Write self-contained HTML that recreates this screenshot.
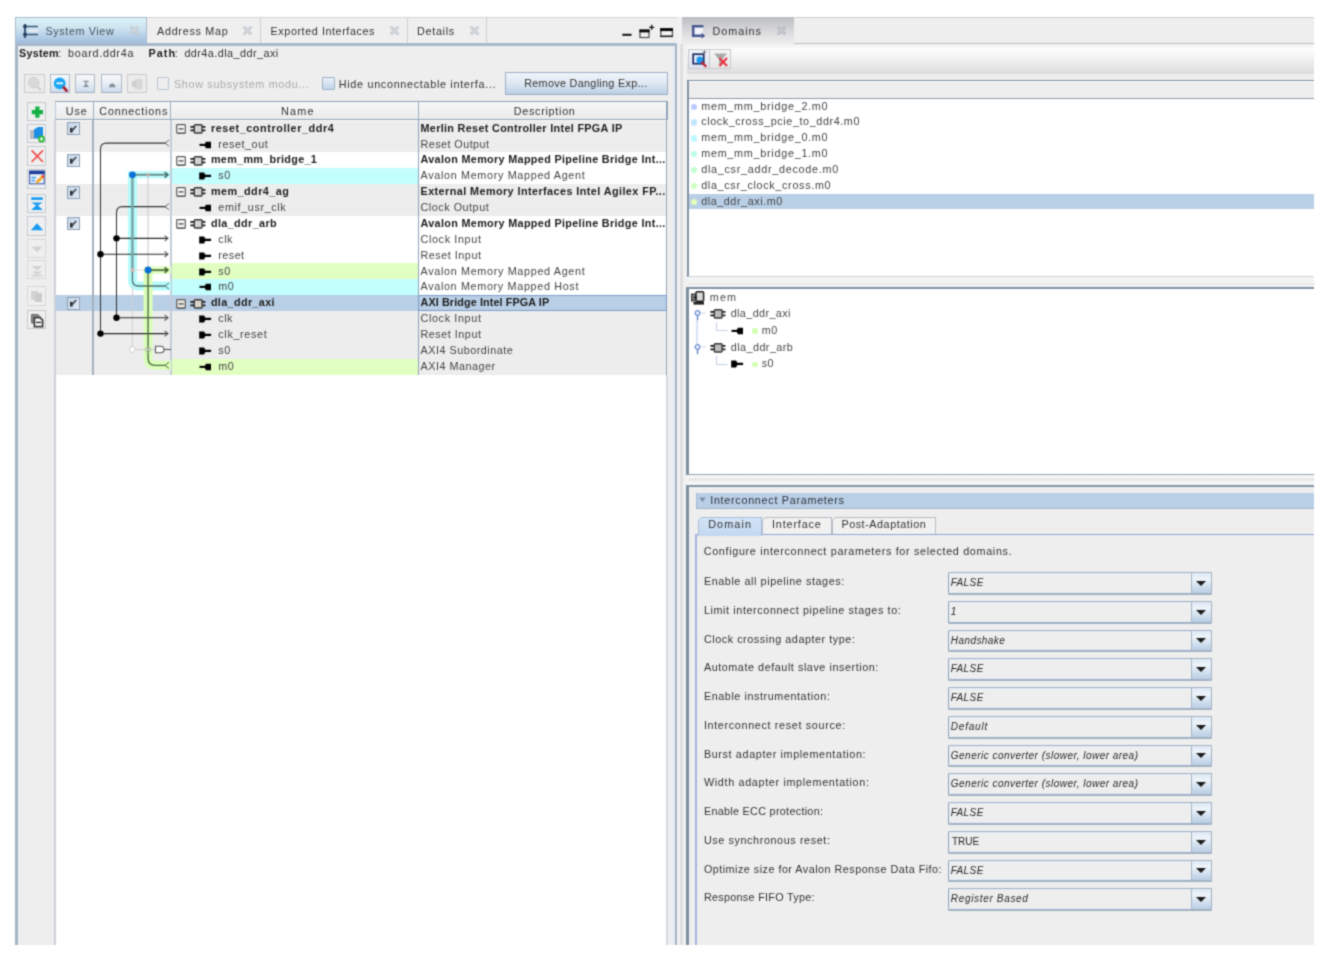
<!DOCTYPE html>
<html><head><meta charset="utf-8"><title>Platform Designer</title>
<style>
html,body{margin:0;padding:0;background:#fff;}
body{width:1334px;height:956px;overflow:hidden;position:relative;font-family:"Liberation Sans",sans-serif;font-size:10.8px;color:#323232;filter:url(#soft);}
.a{position:absolute;}
.t{position:absolute;white-space:nowrap;line-height:14px;height:14px;letter-spacing:0.45px;}
.b{font-weight:bold;color:#1c1c1c;}
.ic{position:absolute;overflow:visible;}
.row{position:absolute;left:55px;width:612px;height:15.875px;}
.cb{position:absolute;width:11px;height:11px;border:1px solid #8f9fb3;background:linear-gradient(135deg,#c6d5e8,#e2ebf6);border-radius:0.5px;}
.cb svg{position:absolute;left:-0.5px;top:-0.5px;}
.btn{position:absolute;border:1px solid #b2bac5;border-bottom-color:#a3b0c0;border-radius:0.6px;background:linear-gradient(#f7f9fb,#e9eff6 45%,#cbdbec);box-sizing:border-box;}
.dis{border:1.3px solid #cbcbcb;background:#ececec;}
.lb{position:absolute;width:19.8px;height:19.8px;box-sizing:border-box;border:1px solid #c6cad0;background:#efefef;}
.combo{position:absolute;left:948px;width:263.8px;height:22.8px;box-sizing:border-box;border:1.7px solid #a3b2c3;border-left-color:#94a5b8;border-bottom-width:2px;border-radius:1.2px;background:#eeeeee;box-shadow:inset 0 0 0 1px #e2ecf6;}
.combo i{position:absolute;left:2.7px;top:4px;font-size:11px;line-height:13px;color:#3a3a3a;white-space:nowrap;}
.combo b{position:absolute;right:0;top:0;width:18.6px;height:100%;border-left:1.2px solid #a5b5c7;background:linear-gradient(#dde8f3,#edf3f9 30%,#d6e3f0 60%,#b9cee6);}
  .combo b:after{content:"";position:absolute;left:3.9px;top:7.8px;border:5.7px solid transparent;border-top:5.4px solid #1c1c1c;border-bottom:none;}
.pl{position:absolute;left:704px;white-space:nowrap;line-height:14px;height:14px;}
</style></head><body>
<svg width="0" height="0" style="position:absolute"><filter id="soft" x="0" y="0" width="100%" height="100%" color-interpolation-filters="sRGB"><feConvolveMatrix order="3" kernelMatrix="0.036 0.118 0.036 0.118 0.384 0.118 0.036 0.118 0.036" divisor="1" edgeMode="duplicate" preserveAlpha="true"/></filter></svg>

<div class="a" style="left:15px;top:17px;width:662px;height:927.9px;background:#eeeeee"></div>
<div class="a" style="left:15px;top:17px;width:662px;height:27px;background:#efefef;border-top:1px solid #d4d4d4;box-sizing:border-box"></div>
<div class="a" style="left:15px;top:17px;width:131.5px;height:27px;background:linear-gradient(#dcf1f6,#cfe6f1 35%,#b7d0e7 68%,#9ebbdc);border:1px solid #a9bccb;border-bottom:none;box-sizing:border-box"></div>
<div class="a" style="left:260.0px;top:18px;width:1px;height:26px;background:#cfcfcf"></div>
<div class="a" style="left:406.5px;top:18px;width:1px;height:26px;background:#cfcfcf"></div>
<div class="a" style="left:486.2px;top:18px;width:1px;height:26px;background:#cfcfcf"></div>
<div class="a" style="left:14.8px;top:44px;width:3px;height:900.9px;background:#a7b5c5"></div>
<div class="a" style="left:17.8px;top:46px;width:1.6px;height:898.9px;background:#e9eef4"></div>
<div class="a" style="left:673.2px;top:46px;width:1.4px;height:898.9px;background:#e6ecf3"></div>
<div class="a" style="left:674.5px;top:44px;width:2.6px;height:900.9px;background:#a7b5c5"></div>
<div class="a" style="left:14.8px;top:43.2px;width:662.3px;height:2.8px;background:#a9b9cb"></div>
<div class="a" style="left:17.8px;top:46px;width:655.4px;height:1px;background:#e6edf4"></div>
<svg class="ic" style="left:22px;top:23px" width="18" height="16" viewBox="0 0 18 16"><path d="M3 1v14" stroke="#2f4a6b" stroke-width="1.8"/><path d="M3 3.5h13M3 11.5h13" stroke="#3d5878" stroke-width="1.6"/><circle cx="3" cy="3.5" r="2" fill="#24405f"/><circle cx="3" cy="11.5" r="2" fill="#24405f"/><rect x="7" y="6" width="9" height="3.5" fill="#dfe8f2"/></svg>
<div class="t" style="left:45.5px;top:24.0px;letter-spacing:0.598px;color:#46525e">System View</div>
<svg class="ic" style="left:129.5px;top:26px" width="9" height="9" viewBox="0 0 9 9"><path d="M1.5 1.5l6 6M7.5 1.5l-6 6" stroke="#b9c0c8" stroke-width="2.6" stroke-linecap="round"/><path d="M1.5 1.5l6 6M7.5 1.5l-6 6" stroke="#f4f4f4" stroke-width="0.9" stroke-linecap="round"/></svg>
<div class="t" style="left:157px;top:24.0px;letter-spacing:0.717px;">Address Map</div>
<svg class="ic" style="left:243px;top:26px" width="9" height="9" viewBox="0 0 9 9"><path d="M1.5 1.5l6 6M7.5 1.5l-6 6" stroke="#b9c0c8" stroke-width="2.6" stroke-linecap="round"/><path d="M1.5 1.5l6 6M7.5 1.5l-6 6" stroke="#f4f4f4" stroke-width="0.9" stroke-linecap="round"/></svg>
<div class="t" style="left:270.6px;top:24.0px;letter-spacing:0.565px;">Exported Interfaces</div>
<svg class="ic" style="left:389.5px;top:26px" width="9" height="9" viewBox="0 0 9 9"><path d="M1.5 1.5l6 6M7.5 1.5l-6 6" stroke="#b9c0c8" stroke-width="2.6" stroke-linecap="round"/><path d="M1.5 1.5l6 6M7.5 1.5l-6 6" stroke="#f4f4f4" stroke-width="0.9" stroke-linecap="round"/></svg>
<div class="t" style="left:417px;top:24.0px;letter-spacing:0.697px;">Details</div>
<svg class="ic" style="left:470.2px;top:26px" width="9" height="9" viewBox="0 0 9 9"><path d="M1.5 1.5l6 6M7.5 1.5l-6 6" stroke="#b9c0c8" stroke-width="2.6" stroke-linecap="round"/><path d="M1.5 1.5l6 6M7.5 1.5l-6 6" stroke="#f4f4f4" stroke-width="0.9" stroke-linecap="round"/></svg>
<svg class="ic" style="left:622px;top:23px" width="52" height="16" viewBox="0 0 52 16"><path d="M0.3 11.8h9.2" stroke="#111" stroke-width="2"/><rect x="18" y="7.5" width="9" height="7" fill="#f4f4f4" stroke="#555" stroke-width="1.3"/><path d="M17.4 7.9h10.2" stroke="#0a0a0a" stroke-width="3"/><path d="M27.2 4.3h5M29.7 1.8v5" stroke="#111" stroke-width="1.3"/><rect x="38.8" y="6" width="11.6" height="7.2" fill="#f6f6f6" stroke="#555" stroke-width="1.3"/><path d="M38.1 6.6h12.9" stroke="#0a0a0a" stroke-width="3"/><path d="M38.1 13.4h12.9" stroke="#222" stroke-width="1.4"/></svg>
<div class="t b" style="left:19px;top:45.9px;letter-spacing:0.256px;">System</div>
<div class="t" style="left:58.3px;top:45.9px;">:</div>
<div class="t" style="left:68px;top:45.9px;letter-spacing:0.717px;">board.ddr4a</div>
<div class="t b" style="left:148.4px;top:45.9px;letter-spacing:1.098px;">Path</div>
<div class="t" style="left:174.8px;top:45.9px;">:</div>
<div class="t" style="left:184.4px;top:45.9px;letter-spacing:0.459px;">ddr4a.dla_ddr_axi</div>
<div class="btn dis" style="left:24px;top:73.6px;width:20.5px;height:19.3px"><svg width="19" height="18" viewBox="0 0 19 18" style="position:absolute;left:0;top:0"><circle cx="8.6" cy="7.6" r="5.3" fill="#d9d9d9" stroke="#d0d0d0"/><path d="M12.3 11.6l3.6 3.8" stroke="#cfcfcf" stroke-width="2.4"/></svg></div>
<div class="btn " style="left:49.5px;top:73.6px;width:20.5px;height:19.3px"><svg width="19" height="18" viewBox="0 0 19 18" style="position:absolute;left:0;top:0"><circle cx="8.7" cy="8.3" r="5.9" fill="#1aa6f4"/><path d="M5.4 8.3h6.6" stroke="#fff" stroke-width="1.7"/><path d="M12.9 12.6l2.6 3" stroke="#b01c2c" stroke-width="2.8" stroke-linecap="round"/></svg></div>
<div class="btn " style="left:74.5px;top:73.6px;width:20.5px;height:19.3px"><svg width="19" height="18" viewBox="0 0 19 18" style="position:absolute;left:0;top:0"><path d="M7.4 6.4h5.2M10 6.6v2.6" stroke="#8a8f96" stroke-width="1.3"/><path d="M6.9 12h6.2l-3.1-3.5z" fill="#8a8f96"/></svg></div>
<div class="btn " style="left:101px;top:73.6px;width:20.5px;height:19.3px"><svg width="19" height="18" viewBox="0 0 19 18" style="position:absolute;left:0;top:0"><path d="M6.9 12.2h6.6q-0.5-3.6-3.3-3.6t-3.3 3.6z" fill="#8a8f96"/></svg></div>
<div class="btn dis" style="left:126.5px;top:73.6px;width:20.5px;height:19.3px"><svg width="19" height="18" viewBox="0 0 19 18" style="position:absolute;left:0;top:0"><path d="M4.6 7.2l2.8-3.2h7v10.4h-7.6v-3.2z" fill="#d6d6d6"/><path d="M3.8 6.6h4v5.4h-4z" fill="#cecece"/></svg></div>
<div class="a" style="left:156.5px;top:77px;width:12.5px;height:12.5px;box-sizing:border-box;border:1px solid #b9c5d2;background:#eeeeee;border-radius:1px"></div>
<div class="t" style="left:174px;top:76.7px;letter-spacing:0.670px;color:#aaaaaa">Show subsystem modu...</div>
<div class="a" style="left:322px;top:77px;width:13px;height:12.5px;box-sizing:border-box;border:1px solid #9fb2c8;background:linear-gradient(#e9f0f8,#c3d5ea);border-radius:1px"></div>
<div class="t" style="left:338.8px;top:76.7px;letter-spacing:0.691px;">Hide unconnectable interfa...</div>
<div class="btn" style="left:505px;top:71.5px;width:163px;height:23.5px;border-color:#9db0c6;background:linear-gradient(#f0f4f9,#e0e9f3 45%,#c3d5e9 90%,#b8cce3)"></div>
<div class="t" style="left:524.2px;top:76.3px;letter-spacing:0.312px;">Remove Dangling Exp...</div>
<div class="lb" style="left:26.5px;top:101.5px;"><svg width="18" height="18" viewBox="0 0 18 18" style="position:absolute;left:0;top:0"><path d="M9.4 3.6v11.2M3.8 9.2h11.2" stroke="#14b045" stroke-width="4.2"/></svg></div>
<div class="lb" style="left:26.5px;top:123.7px;"><svg width="18" height="18" viewBox="0 0 18 18" style="position:absolute;left:0;top:0"><path d="M2 5h5v9H2z" fill="#b9bcc0"/><path d="M6 4.5l4-2.5h5v9l-3 2.5h-6z" fill="#1e8fe6"/><circle cx="13.5" cy="14" r="3.4" fill="#22b52e"/><path d="M13.5 12v4M11.5 14h4" stroke="#fff" stroke-width="1.2"/></svg></div>
<div class="lb" style="left:26.5px;top:146.3px;"><svg width="18" height="18" viewBox="0 0 18 18" style="position:absolute;left:0;top:0"><path d="M3.6 3.4l11.4 11.6M15 3.4L3.6 15" stroke="#f04848" stroke-width="1.6"/></svg></div>
<div class="lb" style="left:26.5px;top:168.8px;"><svg width="18" height="18" viewBox="0 0 18 18" style="position:absolute;left:0;top:0"><rect x="1.6" y="1.2" width="14.6" height="12.6" fill="#eef2fa" stroke="#3a5bb0" stroke-width="1.1"/><rect x="1.1" y="0.8" width="15.6" height="3.4" fill="#1f3f9a"/><path d="M3.4 7.6h4.6M3.4 10.6h3.6" stroke="#4aa3ea" stroke-width="1.6"/><path d="M7.6 13.8l1-3.2 6-5.8 2 2-6 5.8z" fill="#f5a623"/><path d="M13.3 6.1l1.3-1.3 2 2-1.3 1.3z" fill="#e33"/></svg></div>
<div class="lb" style="left:26.5px;top:193.5px;"><svg width="18" height="18" viewBox="0 0 18 18" style="position:absolute;left:0;top:0"><path d="M3.2 3.6h11.6" stroke="#169cf2" stroke-width="2.6"/><path d="M3.2 7.4h11.6L9 11z" fill="#169cf2"/><path d="M3.2 15h11.6L9 9.6z" fill="#169cf2"/></svg></div>
<div class="lb" style="left:26.5px;top:216px;"><svg width="18" height="18" viewBox="0 0 18 18" style="position:absolute;left:0;top:0"><path d="M2.8 13.2h12.4L9 6.2z" fill="#169cf2"/></svg></div>
<div class="lb" style="left:26.5px;top:238.5px;border-color:#d8d8d8;"><svg width="18" height="18" viewBox="0 0 18 18" style="position:absolute;left:0;top:0"><path d="M3.5 6.5h11L9 12.2z" fill="#d2d2d2"/></svg></div>
<div class="lb" style="left:26.5px;top:259.5px;border-color:#d8d8d8;"><svg width="18" height="18" viewBox="0 0 18 18" style="position:absolute;left:0;top:0"><path d="M3.5 5h11L9 9.6z" fill="#d2d2d2"/><path d="M3.5 10.4h11L9 14z" fill="#d2d2d2"/><path d="M3.5 14.6h11" stroke="#d2d2d2" stroke-width="1.6"/></svg></div>
<div class="lb" style="left:26.5px;top:286px;border-color:#d8d8d8;"><svg width="18" height="18" viewBox="0 0 18 18" style="position:absolute;left:0;top:0"><path d="M3 4h7v9H3z" fill="#d3d3d3"/><path d="M7 6h7v9H7z" fill="#cbcbcb"/></svg></div>
<div class="lb" style="left:26.5px;top:309.7px;"><svg width="18" height="18" viewBox="0 0 18 18" style="position:absolute;left:0;top:0"><path d="M3.6 3.6h6.4l2 2v6.4H3.6z" fill="#8d8d8d" stroke="#666" stroke-width="1"/><path d="M6.4 6.6h5.6l2.6 2.6v6.4H6.4z" fill="#fafafa" stroke="#3c3c3c" stroke-width="1.7"/><path d="M8 11.4h5.2" stroke="#3c3c3c" stroke-width="1.5"/></svg></div>
<div class="a" style="left:54.5px;top:101px;width:612.5px;height:843.9px;background:#fff"></div>
<div class="row" style="top:120.500px;background:#ededed"></div>
<div class="row" style="top:136.375px;background:#ededed"></div>
<div class="row" style="top:152.250px;background:#fff"></div>
<div class="row" style="top:168.125px;background:#fff"></div>
<div class="a" style="left:171px;top:168.125px;width:247px;height:15.875px;background:#c2fffd"></div>
<div class="row" style="top:184.000px;background:#ededed"></div>
<div class="row" style="top:199.875px;background:#ededed"></div>
<div class="row" style="top:215.750px;background:#fff"></div>
<div class="row" style="top:231.625px;background:#fff"></div>
<div class="row" style="top:247.500px;background:#fff"></div>
<div class="row" style="top:263.375px;background:#fff"></div>
<div class="a" style="left:171px;top:263.375px;width:247px;height:15.875px;background:#e2ffc2"></div>
<div class="row" style="top:279.250px;background:#fff"></div>
<div class="a" style="left:171px;top:279.250px;width:247px;height:15.875px;background:#c2fffd"></div>
<div class="row" style="top:295.125px;background:#b9cfe6"></div>
<div class="row" style="top:311.000px;background:#ededed"></div>
<div class="row" style="top:326.875px;background:#ededed"></div>
<div class="row" style="top:342.750px;background:#ededed"></div>
<div class="row" style="top:358.625px;background:#ededed"></div>
<div class="a" style="left:171px;top:358.625px;width:247px;height:15.875px;background:#e2ffc2"></div>
<div class="a" style="left:54.5px;top:100.5px;width:613px;height:19.5px;box-sizing:border-box;background:linear-gradient(#f6f7f8,#ebebec);border:1px solid #8ea3bb;border-left-color:#b9c6d4"></div>
<div class="a" style="left:92.5px;top:101px;width:1px;height:18.5px;background:#9fb0c4"></div>
<div class="a" style="left:170.0px;top:101px;width:1px;height:18.5px;background:#9fb0c4"></div>
<div class="a" style="left:417.5px;top:101px;width:1px;height:18.5px;background:#9fb0c4"></div>
<div class="t" style="left:65.7px;top:103.8px;letter-spacing:0.898px;">Use</div>
<div class="t" style="left:99.3px;top:103.8px;letter-spacing:0.797px;">Connections</div>
<div class="t" style="left:281px;top:103.8px;letter-spacing:1.262px;">Name</div>
<div class="t" style="left:513.7px;top:103.8px;letter-spacing:0.718px;">Description</div>
<div class="a" style="left:53.7px;top:120px;width:2.3px;height:824.9px;background:#cdd1d7"></div>
<div class="a" style="left:92.2px;top:120px;width:1.7px;height:254.50px;background:#a5b0be"></div>
<div class="a" style="left:170px;top:120px;width:1.6px;height:254.50px;background:#c3ccd8"></div>
<div class="a" style="left:417.6px;top:120px;width:1px;height:254.50px;background:#8ea3bb"></div>
<div class="a" style="left:665.7px;top:374.5px;width:2.6px;height:570.4px;background:#d5dae0"></div>
<div class="a" style="left:666px;top:101px;width:1.2px;height:273.50px;background:#97a6b8"></div>
<div class="a" style="left:418px;top:295.12px;width:248.5px;height:15.875px;box-sizing:border-box;border:1px solid #7d9cc6"></div>
<div class="cb" style="left:66.8px;top:122.10px"><svg width="12" height="12" viewBox="0 0 12 12"><path d="M3 4.8 H5.6 V9.6 H3Z" fill="#2f3338"/><path d="M4.8 8 L9.2 2.9" fill="none" stroke="#3a3f45" stroke-width="1.5"/></svg></div>
<svg class="ic" style="left:176.1px;top:123.90px" width="11" height="11" viewBox="0 0 11 11"><rect x="0.7" y="0.7" width="8.6" height="8.4" rx="0.8" fill="#f8f8f8" stroke="#5a5a5a" stroke-width="1.2"/><path d="M1 9.3h8.4" stroke="#4a4a4a" stroke-width="0.8"/><path d="M2.6 4.9h4.9" stroke="#3a3a3a" stroke-width="1.2"/></svg>
<svg class="ic" style="left:189.6px;top:123.90px" width="16" height="10" viewBox="0 0 16 10"><path d="M0.4 2.9h15M0.4 6.4h15" stroke="#1c1c1c" stroke-width="1.7"/><rect x="4.3" y="0.7" width="7.8" height="8.3" rx="0.9" fill="#d4d4d4" stroke="#383838" stroke-width="1.4"/></svg>
<div class="t b" style="left:210.9px;top:120.7px;letter-spacing:0.594px;">reset_controller_ddr4</div>
<div class="t b" style="left:420.5px;top:120.7px;letter-spacing:0.331px;">Merlin Reset Controller Intel FPGA IP</div>
<svg class="ic" style="left:198.8px;top:140.57px" width="13" height="8" viewBox="0 0 13 8"><path d="M0.5 3.9h7" stroke="#000" stroke-width="2.1"/><path d="M5.8 3 L6.9 0.7 H12 V7.2 H6.9 L5.8 4.9Z" fill="#000"/></svg>
<div class="t" style="left:218.3px;top:136.57px;letter-spacing:0.546px;color:#444;">reset_out</div>
<div class="t" style="left:420.5px;top:136.57px;letter-spacing:0.443px;color:#444;">Reset Output</div>
<div class="cb" style="left:66.8px;top:153.85px"><svg width="12" height="12" viewBox="0 0 12 12"><path d="M3 4.8 H5.6 V9.6 H3Z" fill="#2f3338"/><path d="M4.8 8 L9.2 2.9" fill="none" stroke="#3a3f45" stroke-width="1.5"/></svg></div>
<svg class="ic" style="left:176.1px;top:155.65px" width="11" height="11" viewBox="0 0 11 11"><rect x="0.7" y="0.7" width="8.6" height="8.4" rx="0.8" fill="#f8f8f8" stroke="#5a5a5a" stroke-width="1.2"/><path d="M1 9.3h8.4" stroke="#4a4a4a" stroke-width="0.8"/><path d="M2.6 4.9h4.9" stroke="#3a3a3a" stroke-width="1.2"/></svg>
<svg class="ic" style="left:189.6px;top:155.65px" width="16" height="10" viewBox="0 0 16 10"><path d="M0.4 2.9h15M0.4 6.4h15" stroke="#1c1c1c" stroke-width="1.7"/><rect x="4.3" y="0.7" width="7.8" height="8.3" rx="0.9" fill="#d4d4d4" stroke="#383838" stroke-width="1.4"/></svg>
<div class="t b" style="left:210.9px;top:152.45px;letter-spacing:0.320px;">mem_mm_bridge_1</div>
<div class="t b" style="left:420.5px;top:152.45px;letter-spacing:0.339px;">Avalon Memory Mapped Pipeline Bridge Int...</div>
<svg class="ic" style="left:198.8px;top:172.32px" width="13" height="8" viewBox="0 0 13 8"><path d="M5 3.9h7.1" stroke="#000" stroke-width="2.3"/><path d="M0.2 0.5 H5.1 L6.3 2.8 V5 L5.1 7.4 H0.2Z" fill="#000"/></svg>
<div class="t" style="left:218.3px;top:168.32px;color:#444;">s0</div>
<div class="t" style="left:420.5px;top:168.32px;letter-spacing:0.670px;color:#444;">Avalon Memory Mapped Agent</div>
<div class="cb" style="left:66.8px;top:185.60px"><svg width="12" height="12" viewBox="0 0 12 12"><path d="M3 4.8 H5.6 V9.6 H3Z" fill="#2f3338"/><path d="M4.8 8 L9.2 2.9" fill="none" stroke="#3a3f45" stroke-width="1.5"/></svg></div>
<svg class="ic" style="left:176.1px;top:187.40px" width="11" height="11" viewBox="0 0 11 11"><rect x="0.7" y="0.7" width="8.6" height="8.4" rx="0.8" fill="#f8f8f8" stroke="#5a5a5a" stroke-width="1.2"/><path d="M1 9.3h8.4" stroke="#4a4a4a" stroke-width="0.8"/><path d="M2.6 4.9h4.9" stroke="#3a3a3a" stroke-width="1.2"/></svg>
<svg class="ic" style="left:189.6px;top:187.40px" width="16" height="10" viewBox="0 0 16 10"><path d="M0.4 2.9h15M0.4 6.4h15" stroke="#1c1c1c" stroke-width="1.7"/><rect x="4.3" y="0.7" width="7.8" height="8.3" rx="0.9" fill="#d4d4d4" stroke="#383838" stroke-width="1.4"/></svg>
<div class="t b" style="left:210.9px;top:184.2px;letter-spacing:0.478px;">mem_ddr4_ag</div>
<div class="t b" style="left:420.5px;top:184.2px;letter-spacing:0.436px;">External Memory Interfaces Intel Agilex FP...</div>
<svg class="ic" style="left:198.8px;top:204.07px" width="13" height="8" viewBox="0 0 13 8"><path d="M0.5 3.9h7" stroke="#000" stroke-width="2.1"/><path d="M5.8 3 L6.9 0.7 H12 V7.2 H6.9 L5.8 4.9Z" fill="#000"/></svg>
<div class="t" style="left:218.3px;top:200.07px;letter-spacing:0.617px;color:#444;">emif_usr_clk</div>
<div class="t" style="left:420.5px;top:200.07px;letter-spacing:0.525px;color:#444;">Clock Output</div>
<div class="cb" style="left:66.8px;top:217.35px"><svg width="12" height="12" viewBox="0 0 12 12"><path d="M3 4.8 H5.6 V9.6 H3Z" fill="#2f3338"/><path d="M4.8 8 L9.2 2.9" fill="none" stroke="#3a3f45" stroke-width="1.5"/></svg></div>
<svg class="ic" style="left:176.1px;top:219.15px" width="11" height="11" viewBox="0 0 11 11"><rect x="0.7" y="0.7" width="8.6" height="8.4" rx="0.8" fill="#f8f8f8" stroke="#5a5a5a" stroke-width="1.2"/><path d="M1 9.3h8.4" stroke="#4a4a4a" stroke-width="0.8"/><path d="M2.6 4.9h4.9" stroke="#3a3a3a" stroke-width="1.2"/></svg>
<svg class="ic" style="left:189.6px;top:219.15px" width="16" height="10" viewBox="0 0 16 10"><path d="M0.4 2.9h15M0.4 6.4h15" stroke="#1c1c1c" stroke-width="1.7"/><rect x="4.3" y="0.7" width="7.8" height="8.3" rx="0.9" fill="#d4d4d4" stroke="#383838" stroke-width="1.4"/></svg>
<div class="t b" style="left:210.9px;top:215.95px;letter-spacing:0.399px;">dla_ddr_arb</div>
<div class="t b" style="left:420.5px;top:215.95px;letter-spacing:0.339px;">Avalon Memory Mapped Pipeline Bridge Int...</div>
<svg class="ic" style="left:198.8px;top:235.82px" width="13" height="8" viewBox="0 0 13 8"><path d="M5 3.9h7.1" stroke="#000" stroke-width="2.3"/><path d="M0.2 0.5 H5.1 L6.3 2.8 V5 L5.1 7.4 H0.2Z" fill="#000"/></svg>
<div class="t" style="left:218.3px;top:231.82px;color:#444;">clk</div>
<div class="t" style="left:420.5px;top:231.82px;letter-spacing:0.638px;color:#444;">Clock Input</div>
<svg class="ic" style="left:198.8px;top:251.70px" width="13" height="8" viewBox="0 0 13 8"><path d="M5 3.9h7.1" stroke="#000" stroke-width="2.3"/><path d="M0.2 0.5 H5.1 L6.3 2.8 V5 L5.1 7.4 H0.2Z" fill="#000"/></svg>
<div class="t" style="left:218.3px;top:247.7px;color:#444;">reset</div>
<div class="t" style="left:420.5px;top:247.7px;letter-spacing:0.518px;color:#444;">Reset Input</div>
<svg class="ic" style="left:198.8px;top:267.57px" width="13" height="8" viewBox="0 0 13 8"><path d="M5 3.9h7.1" stroke="#000" stroke-width="2.3"/><path d="M0.2 0.5 H5.1 L6.3 2.8 V5 L5.1 7.4 H0.2Z" fill="#000"/></svg>
<div class="t" style="left:218.3px;top:263.57px;color:#444;">s0</div>
<div class="t" style="left:420.5px;top:263.57px;letter-spacing:0.670px;color:#444;">Avalon Memory Mapped Agent</div>
<svg class="ic" style="left:198.8px;top:283.45px" width="13" height="8" viewBox="0 0 13 8"><path d="M0.5 3.9h7" stroke="#000" stroke-width="2.1"/><path d="M5.8 3 L6.9 0.7 H12 V7.2 H6.9 L5.8 4.9Z" fill="#000"/></svg>
<div class="t" style="left:218.3px;top:279.45px;color:#444;">m0</div>
<div class="t" style="left:420.5px;top:279.45px;letter-spacing:0.661px;color:#444;">Avalon Memory Mapped Host</div>
<div class="cb" style="left:66.8px;top:296.73px"><svg width="12" height="12" viewBox="0 0 12 12"><path d="M3 4.8 H5.6 V9.6 H3Z" fill="#2f3338"/><path d="M4.8 8 L9.2 2.9" fill="none" stroke="#3a3f45" stroke-width="1.5"/></svg></div>
<svg class="ic" style="left:176.1px;top:298.52px" width="11" height="11" viewBox="0 0 11 11"><rect x="0.7" y="0.7" width="8.6" height="8.4" rx="0.8" fill="#ebe8e1" stroke="#5a5a5a" stroke-width="1.2"/><path d="M1 9.3h8.4" stroke="#4a4a4a" stroke-width="0.8"/><path d="M2.6 4.9h4.9" stroke="#3a3a3a" stroke-width="1.2"/></svg>
<svg class="ic" style="left:189.6px;top:298.52px" width="16" height="10" viewBox="0 0 16 10"><path d="M0.4 2.9h15M0.4 6.4h15" stroke="#1c1c1c" stroke-width="1.7"/><rect x="4.3" y="0.7" width="7.8" height="8.3" rx="0.9" fill="#d9d5cb" stroke="#383838" stroke-width="1.4"/></svg>
<div class="t b" style="left:210.9px;top:295.32px;letter-spacing:0.368px;">dla_ddr_axi</div>
<div class="t b" style="left:420.5px;top:295.32px;letter-spacing:0.109px;">AXI Bridge Intel FPGA IP</div>
<svg class="ic" style="left:198.8px;top:315.20px" width="13" height="8" viewBox="0 0 13 8"><path d="M5 3.9h7.1" stroke="#000" stroke-width="2.3"/><path d="M0.2 0.5 H5.1 L6.3 2.8 V5 L5.1 7.4 H0.2Z" fill="#000"/></svg>
<div class="t" style="left:218.3px;top:311.2px;color:#444;">clk</div>
<div class="t" style="left:420.5px;top:311.2px;letter-spacing:0.638px;color:#444;">Clock Input</div>
<svg class="ic" style="left:198.8px;top:331.07px" width="13" height="8" viewBox="0 0 13 8"><path d="M5 3.9h7.1" stroke="#000" stroke-width="2.3"/><path d="M0.2 0.5 H5.1 L6.3 2.8 V5 L5.1 7.4 H0.2Z" fill="#000"/></svg>
<div class="t" style="left:218.3px;top:327.07px;letter-spacing:0.648px;color:#444;">clk_reset</div>
<div class="t" style="left:420.5px;top:327.07px;letter-spacing:0.518px;color:#444;">Reset Input</div>
<svg class="ic" style="left:198.8px;top:346.95px" width="13" height="8" viewBox="0 0 13 8"><path d="M5 3.9h7.1" stroke="#000" stroke-width="2.3"/><path d="M0.2 0.5 H5.1 L6.3 2.8 V5 L5.1 7.4 H0.2Z" fill="#000"/></svg>
<div class="t" style="left:218.3px;top:342.95px;color:#444;">s0</div>
<div class="t" style="left:420.5px;top:342.95px;letter-spacing:0.504px;color:#444;">AXI4 Subordinate</div>
<svg class="ic" style="left:198.8px;top:362.82px" width="13" height="8" viewBox="0 0 13 8"><path d="M0.5 3.9h7" stroke="#000" stroke-width="2.1"/><path d="M5.8 3 L6.9 0.7 H12 V7.2 H6.9 L5.8 4.9Z" fill="#000"/></svg>
<div class="t" style="left:218.3px;top:358.82px;color:#444;">m0</div>
<div class="t" style="left:420.5px;top:358.82px;letter-spacing:0.515px;color:#444;">AXI4 Manager</div>
<svg class="ic" style="left:0;top:0" width="680" height="400" viewBox="0 0 680 400" fill="none"><path d="M132.4 174.86 H170" stroke="#c2fffd" stroke-width="7.5"/><path d="M132.4 171.36 V279.99 q0 6 6 6 H171" stroke="#b6fbfb" stroke-width="9"/><path d="M148.1 270.11 H171" stroke="#e2ffc2" stroke-width="7.5"/><path d="M148.1 267.11 V358.36 q0 7 7 7 H171" stroke="#daffb8" stroke-width="9"/><path d="M148.1 174.86 V270.11" stroke="#c9c9c9" stroke-width="1"/><path d="M132.4 285.99 V349.49" stroke="#d2d2d2" stroke-width="1"/><path d="M132.4 270.11 H148.1" stroke="#ecd9d9" stroke-width="1"/><path d="M166 143.11 H106.5 q-6 0 -6 6 V333.61" stroke="#333" stroke-width="1.05"/><path d="M165 143.11 L169 140.01 M165 143.11 L169 146.21" stroke="#666" stroke-width="1"/><path d="M166 206.61 H122.5 q-6 0 -6 6 V317.74" stroke="#333" stroke-width="1.05"/><path d="M165 206.61 L169 203.51 M165 206.61 L169 209.71" stroke="#666" stroke-width="1"/><path d="M116.5 238.36 H167.5" stroke="#262626" stroke-width="1.05"/><path d="M164.6 235.56 L168 238.36 L164.6 241.16" stroke="#555" stroke-width="1.1"/><circle cx="116.5" cy="238.36" r="3.2" fill="#000"/><path d="M100.5 254.24 H167.5" stroke="#262626" stroke-width="1.05"/><path d="M164.6 251.44 L168 254.24 L164.6 257.04" stroke="#555" stroke-width="1.1"/><circle cx="100.5" cy="254.24" r="3.2" fill="#000"/><path d="M116.5 317.74 H167.5" stroke="#262626" stroke-width="1.05"/><path d="M164.6 314.94 L168 317.74 L164.6 320.54" stroke="#555" stroke-width="1.1"/><circle cx="116.5" cy="317.74" r="3.2" fill="#000"/><path d="M100.5 333.61 H167.5" stroke="#262626" stroke-width="1.05"/><path d="M164.6 330.81 L168 333.61 L164.6 336.41" stroke="#555" stroke-width="1.1"/><circle cx="100.5" cy="333.61" r="3.2" fill="#000"/><path d="M132.4 174.86 V272.11" stroke="#7aa6a6" stroke-width="2.6"/><path d="M132.4 270.11 V279.99 q0 6 6 6 H165" stroke="#4d7070" stroke-width="1.3"/><path d="M165 285.99 L169 282.89 M165 285.99 L169 289.09" stroke="#4d7070" stroke-width="1"/><path d="M132.4 174.86 H167" stroke="#668f8f" stroke-width="2"/><path d="M164.6 172.06 L168 174.86 L164.6 177.66" stroke="#3d6666" stroke-width="1.5"/><rect x="146.6" y="173.36" width="3" height="3" fill="#c9a9a9"/><circle cx="132.4" cy="174.86" r="3.4" fill="#0a6fd6"/><path d="M148.1 270.11 V358.36 q0 7 7 7 H165" stroke="#4f6b40" stroke-width="1.4"/><path d="M165 365.36 L169 362.26 M165 365.36 L169 368.46" stroke="#4f6f3c" stroke-width="1"/><path d="M148.1 270.11 H167" stroke="#5b7d45" stroke-width="2"/><path d="M164.6 267.31 L168 270.11 L164.6 272.91" stroke="#3f5f2c" stroke-width="1.5"/><rect x="130.9" y="268.11" width="3" height="4" fill="#d2b0b0"/><circle cx="148.1" cy="270.11" r="3.5" fill="#0a6fd6"/><path d="M132.4 349.49 H156" stroke="#cfcfcf" stroke-width="1"/><circle cx="132.4" cy="349.49" r="2.8" fill="#fff" stroke="#d9d9d9" stroke-width="1.2"/><circle cx="148.1" cy="349.49" r="2.8" fill="none" stroke="#b9c4ae" stroke-width="1"/><path d="M155.5 346.19 H160.6 A3.4 3.3 0 0 1 160.6 352.79 H155.5Z" fill="#fff" stroke="#555" stroke-width="1.1"/><path d="M164 349.49 H171" stroke="#555" stroke-width="1.1"/></svg>
<div class="a" style="left:677px;top:17px;width:10px;height:927.9px;background:#f2f1f1"></div>
<div class="a" style="left:682.2px;top:17px;width:632px;height:927.9px;background:#eeeeee"></div>
<div class="a" style="left:677px;top:44px;width:9.5px;height:900.9px;background:linear-gradient(90deg,#f2f1f1 0,#f2f1f1 2.6px,#e0e0e0 3.2px,#dedede 5.6px,#f2f1f1 6.4px)"></div>
<div class="a" style="left:682.2px;top:17px;width:632px;height:26.5px;background:#eeeeee;border-top:1px solid #cfcfcf;border-bottom:1px solid #c2c2c2;box-sizing:border-box"></div>
<div class="a" style="left:682.2px;top:17px;width:111.8px;height:27px;background:linear-gradient(#bbbdc1,#cfd0d3 35%,#e6e6e7 80%,#eeeeee)"></div>
<svg class="ic" style="left:691px;top:24px" width="16" height="14" viewBox="0 0 16 14"><path d="M12.5 2.2H2.2v9.6h8.5" fill="#f3f5fa" stroke="#46588f" stroke-width="2.5"/><path d="M10.5 9l3.8 2.8-3.8 2.8z" fill="#3d4f86"/></svg>
<div class="t" style="left:712.5px;top:24.0px;letter-spacing:0.982px;">Domains</div>
<svg class="ic" style="left:776.5px;top:26px" width="9" height="9" viewBox="0 0 9 9"><path d="M1.5 1.5l6 6M7.5 1.5l-6 6" stroke="#a9afb6" stroke-width="2.6" stroke-linecap="round"/><path d="M1.5 1.5l6 6M7.5 1.5l-6 6" stroke="#f0f0f0" stroke-width="0.9" stroke-linecap="round"/></svg>
<div class="a" style="left:686.5px;top:44px;width:627.7px;height:29.5px;background:linear-gradient(#f0f0f0,#fdfdfd 18%,#efefef 55%,#dcdcdc 100%)"></div>
<div class="a" style="left:688.3px;top:49.3px;width:21.4px;height:20px;box-sizing:border-box;border:1px solid #c4c7cc;background:linear-gradient(#f1f3f8,#dfe3ee)"></div>
<div class="a" style="left:709.7px;top:49.3px;width:21px;height:20px;box-sizing:border-box;border:1px solid #c9c9c9;border-left:none;background:linear-gradient(#f6f6f6,#e6e6e6)"></div>
<svg class="ic" style="left:691px;top:51px" width="18" height="17" viewBox="0 0 18 17"><rect x="2.2" y="3.2" width="10.5" height="9.5" fill="#e6ebf5" stroke="#1c2b63" stroke-width="1.7"/><path d="M11.5 1h4M13.5 -0.6v3.6" stroke="#666" stroke-width="0.9"/><circle cx="8.8" cy="9" r="3.4" fill="#1b98ee"/><path d="M11 11.5l3.6 3.6" stroke="#c4212f" stroke-width="2.2" stroke-linecap="round"/></svg>
<svg class="ic" style="left:712px;top:51px" width="18" height="17" viewBox="0 0 18 17"><path d="M2 2.5h13l-5 6v6l-3-1.8V8.5z" fill="#a9a9a9"/><path d="M7.4 7l7.6 8M15 7l-7.6 8" stroke="#ea3440" stroke-width="2.2"/></svg>
<div class="a" style="left:687px;top:80px;width:627.2px;height:197px;background:#fff;border-left:2px solid #8292a4;border-top:1.8px solid #7a8da3;border-bottom:1.6px solid #d0d4d9;box-sizing:border-box"></div>
<div class="a" style="left:688.6px;top:81.6px;width:625.6px;height:17px;background:#eeeeee;border-bottom:1.5px solid #8f99a6;box-sizing:border-box"></div>
<div class="a" style="left:691.2px;top:103.60px;width:6.2px;height:6.2px;border-radius:50%;background:#b9caff"></div>
<div class="t" style="left:701.2px;top:98.6px;letter-spacing:0.728px;color:#444;">mem_mm_bridge_2.m0</div>
<div class="a" style="left:691.2px;top:119.47px;width:6.2px;height:6.2px;border-radius:50%;background:#c3e6ff"></div>
<div class="t" style="left:701.2px;top:114.47px;letter-spacing:0.594px;color:#444;">clock_cross_pcie_to_ddr4.m0</div>
<div class="a" style="left:691.2px;top:135.35px;width:6.2px;height:6.2px;border-radius:50%;background:#bdf8ff"></div>
<div class="t" style="left:701.2px;top:130.35px;letter-spacing:0.728px;color:#444;">mem_mm_bridge_0.m0</div>
<div class="a" style="left:691.2px;top:151.22px;width:6.2px;height:6.2px;border-radius:50%;background:#bdfce9"></div>
<div class="t" style="left:701.2px;top:146.22px;letter-spacing:0.728px;color:#444;">mem_mm_bridge_1.m0</div>
<div class="a" style="left:691.2px;top:167.10px;width:6.2px;height:6.2px;border-radius:50%;background:#c3ffcf"></div>
<div class="t" style="left:701.2px;top:162.1px;letter-spacing:0.721px;color:#444;">dla_csr_addr_decode.m0</div>
<div class="a" style="left:691.2px;top:182.97px;width:6.2px;height:6.2px;border-radius:50%;background:#cdffc3"></div>
<div class="t" style="left:701.2px;top:177.97px;letter-spacing:0.675px;color:#444;">dla_csr_clock_cross.m0</div>
<div class="a" style="left:688.6px;top:193.65px;width:625.6px;height:15.6px;background:#b9cfe6"></div>
<div class="a" style="left:691.2px;top:198.85px;width:6.2px;height:6.2px;border-radius:50%;background:#e2ffb9"></div>
<div class="t" style="left:701.2px;top:193.85px;letter-spacing:0.552px;color:#444;">dla_ddr_axi.m0</div>
<div class="a" style="left:687px;top:277.4px;width:627.2px;height:9.4px;background:#f4f4f4"></div>
<div class="a" style="left:689px;top:282.6px;width:624.5px;height:2.4px;background:repeating-linear-gradient(90deg,#dedede 0 1.2px,#f1f1f1 1.2px 3px)"></div>
<div class="a" style="left:686.2px;top:286.8px;width:628px;height:188px;background:#fff;border-left:3.2px solid #7e8fa1;border-top:2.6px solid #7d90a6;border-bottom:1px solid #92a3b6;box-sizing:border-box"></div>
<svg class="ic" style="left:691px;top:290.5px" width="14" height="14" viewBox="0 0 14 14"><rect x="0.5" y="3" width="5" height="7" fill="#777" stroke="#333" stroke-width="1"/><rect x="5" y="0.8" width="7.6" height="9.4" rx="1" fill="#d9d9d9" stroke="#222" stroke-width="1.5"/><path d="M2.5 12.3h10.5" stroke="#222" stroke-width="2.6"/><path d="M3 6.5h3" stroke="#111" stroke-width="1.5"/></svg>
<div class="t" style="left:709.7px;top:289.7px;letter-spacing:1.200px;color:#484848;">mem</div>
<div class="a" style="left:696.3px;top:320px;width:1.6px;height:24px;background:#d9e2f3"></div>
<svg class="ic" style="left:693.6px;top:309.4px" width="12" height="14" viewBox="0 0 12 14"><path d="M3.5 6v5.2" stroke="#5a7fc0" stroke-width="1.3"/><circle cx="3.5" cy="4" r="2.3" fill="#f4f7fd" stroke="#6b8ed2" stroke-width="1.3"/><path d="M6 4h5.6" stroke="#c9d6ee" stroke-width="1"/></svg>
<svg class="ic" style="left:710px;top:309.2px" width="16" height="10" viewBox="0 0 16 10"><path d="M0.4 2.9h15M0.4 6.4h15" stroke="#1c1c1c" stroke-width="1.7"/><rect x="4.3" y="0.7" width="7.8" height="8.3" rx="0.9" fill="#bdbdbd" stroke="#383838" stroke-width="1.4"/></svg>
<div class="t" style="left:730.7px;top:306.2px;letter-spacing:0.387px;color:#484848;">dla_ddr_axi</div>
<svg class="ic" style="left:716px;top:322px" width="12" height="10" viewBox="0 0 12 10"><path d="M0.5 0v8.5h11" fill="none" stroke="#c3d2ea" stroke-width="1"/></svg>
<svg class="ic" style="left:730.7px;top:326.8px" width="13" height="8" viewBox="0 0 13 8"><path d="M0.5 3.9h7" stroke="#000" stroke-width="2.1"/><path d="M5.8 3 L6.9 0.7 H12 V7.2 H6.9 L5.8 4.9Z" fill="#000"/></svg>
<div class="a" style="left:752px;top:328px;width:5.6px;height:5.6px;border-radius:50%;background:#d2ffb2"></div>
<div class="t" style="left:761.7px;top:322.8px;color:#484848;">m0</div>
<svg class="ic" style="left:693.6px;top:342.9px" width="12" height="14" viewBox="0 0 12 14"><path d="M3.5 6v5.2" stroke="#5a7fc0" stroke-width="1.3"/><circle cx="3.5" cy="4" r="2.3" fill="#f4f7fd" stroke="#6b8ed2" stroke-width="1.3"/><path d="M6 4h5.6" stroke="#c9d6ee" stroke-width="1"/></svg>
<svg class="ic" style="left:710px;top:342.7px" width="16" height="10" viewBox="0 0 16 10"><path d="M0.4 2.9h15M0.4 6.4h15" stroke="#1c1c1c" stroke-width="1.7"/><rect x="4.3" y="0.7" width="7.8" height="8.3" rx="0.9" fill="#bdbdbd" stroke="#383838" stroke-width="1.4"/></svg>
<div class="t" style="left:730.7px;top:339.6px;letter-spacing:0.456px;color:#484848;">dla_ddr_arb</div>
<svg class="ic" style="left:716px;top:355.5px" width="12" height="10" viewBox="0 0 12 10"><path d="M0.5 0v8.5h11" fill="none" stroke="#c3d2ea" stroke-width="1"/></svg>
<svg class="ic" style="left:730.7px;top:360.3px" width="13" height="8" viewBox="0 0 13 8"><path d="M5 3.9h7.1" stroke="#000" stroke-width="2.3"/><path d="M0.2 0.5 H5.1 L6.3 2.8 V5 L5.1 7.4 H0.2Z" fill="#000"/></svg>
<div class="a" style="left:752px;top:361.5px;width:5.6px;height:5.6px;border-radius:50%;background:#d2ffb2"></div>
<div class="t" style="left:761.7px;top:356.3px;color:#484848;">s0</div>
<div class="a" style="left:687px;top:475px;width:627.2px;height:10px;background:#f5f5f5"></div>
<div class="a" style="left:689px;top:478px;width:624.5px;height:3.4px;background:repeating-linear-gradient(90deg,#d9d9d9 0 1.2px,#f1f1f1 1.2px 3px)"></div>
<div class="a" style="left:686.2px;top:484.5px;width:628px;height:460.4px;background:#eeeeee;border-left:3.2px solid #7e8fa1;border-top:2.2px solid #8394a6;box-sizing:border-box"></div>
<div class="a" style="left:695.5px;top:493.3px;width:618.7px;height:15.3px;background:#b9cfe6;border-bottom:1.2px solid #9fb3ca;border-left:1px solid #a5b8cf;box-sizing:border-box"></div>
<svg class="ic" style="left:698.5px;top:496.5px" width="7" height="6" viewBox="0 0 7 6"><path d="M0.3 0.5h6.4L3.5 5z" fill="#7d8ea3"/></svg>
<div class="t" style="left:710.2px;top:493.2px;letter-spacing:0.708px;color:#2c333b">Interconnect Parameters</div>
<div class="a" style="left:695.2px;top:534px;width:619px;height:410.9px;border-left:2px solid #abb2e2;border-top:1.4px solid #8fa9d6;box-sizing:border-box;background:#eeeeee"></div>
<div class="a" style="left:697.5px;top:517px;width:64px;height:18.5px;background:linear-gradient(#d3e3f5,#c2d8f0);border:1px solid #a9bfdc;border-bottom:none;border-radius:5px 0 0 0;box-sizing:border-box"></div>
<div class="a" style="left:761.5px;top:517px;width:70px;height:17px;background:#f1f1f1;border:1px solid #b7bcc4;border-bottom:none;border-radius:5px 0 0 0;box-sizing:border-box"></div>
<div class="a" style="left:831.5px;top:517px;width:104px;height:17px;background:#f1f1f1;border:1px solid #b7bcc4;border-bottom:none;border-radius:5px 0 0 0;box-sizing:border-box"></div>
<div class="t" style="left:708.2px;top:516.9px;letter-spacing:1.116px;">Domain</div>
<div class="t" style="left:772px;top:516.9px;letter-spacing:0.848px;">Interface</div>
<div class="t" style="left:841.4px;top:516.9px;letter-spacing:0.541px;">Post-Adaptation</div>
<div class="t" style="left:703.7px;top:543.9px;letter-spacing:0.669px;">Configure interconnect parameters for selected domains.</div>
<div class="t" style="left:703.9px;top:574.1px;letter-spacing:0.571px;">Enable all pipeline stages:</div>
<div class="combo" style="top:572.00px"><b></b></div>
<div class="t" style="left:950.8px;top:576.1px;letter-spacing:0.391px;font-size:10px;color:#262626;line-height:13px;font-style:italic;">FALSE</div>
<div class="t" style="left:703.9px;top:602.86px;letter-spacing:0.601px;">Limit interconnect pipeline stages to:</div>
<div class="combo" style="top:600.75px"><b></b></div>
<div class="t" style="left:950.8px;top:604.86px;font-size:10px;color:#262626;line-height:13px;font-style:italic;">1</div>
<div class="t" style="left:703.9px;top:631.61px;letter-spacing:0.547px;">Clock crossing adapter type:</div>
<div class="combo" style="top:629.51px"><b></b></div>
<div class="t" style="left:950.8px;top:633.61px;letter-spacing:0.426px;font-size:10px;color:#262626;line-height:13px;font-style:italic;">Handshake</div>
<div class="t" style="left:703.9px;top:660.37px;letter-spacing:0.554px;">Automate default slave insertion:</div>
<div class="combo" style="top:658.26px"><b></b></div>
<div class="t" style="left:950.8px;top:662.37px;letter-spacing:0.391px;font-size:10px;color:#262626;line-height:13px;font-style:italic;">FALSE</div>
<div class="t" style="left:703.9px;top:689.12px;letter-spacing:0.571px;">Enable instrumentation:</div>
<div class="combo" style="top:687.02px"><b></b></div>
<div class="t" style="left:950.8px;top:691.12px;letter-spacing:0.391px;font-size:10px;color:#262626;line-height:13px;font-style:italic;">FALSE</div>
<div class="t" style="left:703.9px;top:717.88px;letter-spacing:0.658px;">Interconnect reset source:</div>
<div class="combo" style="top:715.77px"><b></b></div>
<div class="t" style="left:950.8px;top:719.88px;letter-spacing:0.785px;font-size:10px;color:#262626;line-height:13px;font-style:italic;">Default</div>
<div class="t" style="left:703.9px;top:746.63px;letter-spacing:0.630px;">Burst adapter implementation:</div>
<div class="combo" style="top:744.53px"><b></b></div>
<div class="t" style="left:950.8px;top:748.63px;letter-spacing:0.478px;font-size:10px;color:#262626;line-height:13px;font-style:italic;">Generic converter (slower, lower area)</div>
<div class="t" style="left:703.9px;top:775.38px;letter-spacing:0.663px;">Width adapter implementation:</div>
<div class="combo" style="top:773.28px"><b></b></div>
<div class="t" style="left:950.8px;top:777.38px;letter-spacing:0.478px;font-size:10px;color:#262626;line-height:13px;font-style:italic;">Generic converter (slower, lower area)</div>
<div class="t" style="left:703.9px;top:804.14px;letter-spacing:0.298px;">Enable ECC protection:</div>
<div class="combo" style="top:802.04px"><b></b></div>
<div class="t" style="left:950.8px;top:806.14px;letter-spacing:0.391px;font-size:10px;color:#262626;line-height:13px;font-style:italic;">FALSE</div>
<div class="t" style="left:703.9px;top:832.9px;letter-spacing:0.599px;">Use synchronous reset:</div>
<div class="combo" style="top:830.80px"><b></b></div>
<div class="t" style="left:952px;top:834.9px;letter-spacing:-0.011px;font-size:10px;color:#262626;line-height:13px;">TRUE</div>
<div class="t" style="left:703.9px;top:861.65px;letter-spacing:0.480px;">Optimize size for Avalon Response Data Fifo:</div>
<div class="combo" style="top:859.55px"><b></b></div>
<div class="t" style="left:950.8px;top:863.65px;letter-spacing:0.391px;font-size:10px;color:#262626;line-height:13px;font-style:italic;">FALSE</div>
<div class="t" style="left:703.9px;top:890.41px;letter-spacing:0.293px;">Response FIFO Type:</div>
<div class="combo" style="top:888.31px"><b></b></div>
<div class="t" style="left:950.8px;top:892.41px;letter-spacing:0.671px;font-size:10px;color:#262626;line-height:13px;font-style:italic;">Register Based</div>
</body></html>
